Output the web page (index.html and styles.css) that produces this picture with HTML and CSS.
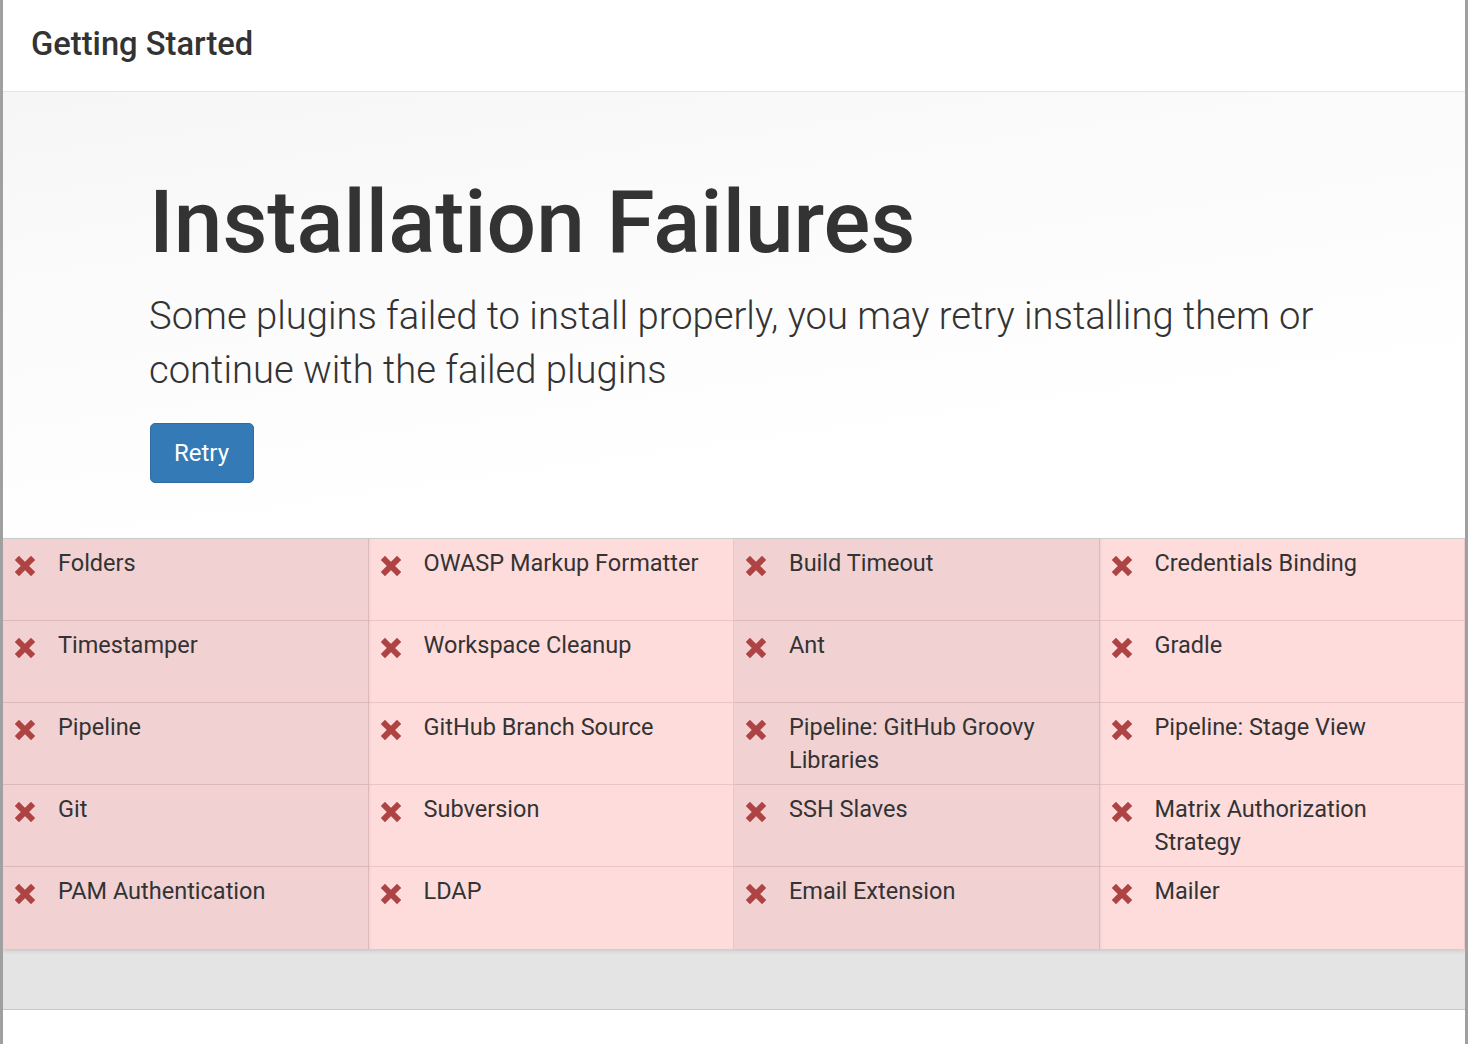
FILE: index.html
```html
<!DOCTYPE html>
<html lang="en">
<head>
<meta charset="utf-8">
<title>Getting Started</title>
<link rel="stylesheet" href="styles.css">
</head>
<body>
<div class="frame">
  <header class="header">
    <h2 class="header-title">Getting Started</h2>
  </header>
  <section class="hero">
    <h1 class="hero-title">Installation Failures</h1>
    <p class="hero-lead">Some plugins failed to install properly, you may retry installing them or continue with the failed plugins</p>
    <button class="btn-retry" type="button">Retry</button>
  </section>
  <div class="plugins">
    <div class="plugin"><svg class="x" viewBox="0 0 20 20"><path d="M4 4L16 16M16 4L4 16"/></svg><span class="name">Folders</span></div>
    <div class="plugin"><svg class="x" viewBox="0 0 20 20"><path d="M4 4L16 16M16 4L4 16"/></svg><span class="name">OWASP Markup Formatter</span></div>
    <div class="plugin"><svg class="x" viewBox="0 0 20 20"><path d="M4 4L16 16M16 4L4 16"/></svg><span class="name">Build Timeout</span></div>
    <div class="plugin"><svg class="x" viewBox="0 0 20 20"><path d="M4 4L16 16M16 4L4 16"/></svg><span class="name">Credentials Binding</span></div>
    <div class="plugin"><svg class="x" viewBox="0 0 20 20"><path d="M4 4L16 16M16 4L4 16"/></svg><span class="name">Timestamper</span></div>
    <div class="plugin"><svg class="x" viewBox="0 0 20 20"><path d="M4 4L16 16M16 4L4 16"/></svg><span class="name">Workspace Cleanup</span></div>
    <div class="plugin"><svg class="x" viewBox="0 0 20 20"><path d="M4 4L16 16M16 4L4 16"/></svg><span class="name">Ant</span></div>
    <div class="plugin"><svg class="x" viewBox="0 0 20 20"><path d="M4 4L16 16M16 4L4 16"/></svg><span class="name">Gradle</span></div>
    <div class="plugin"><svg class="x" viewBox="0 0 20 20"><path d="M4 4L16 16M16 4L4 16"/></svg><span class="name">Pipeline</span></div>
    <div class="plugin"><svg class="x" viewBox="0 0 20 20"><path d="M4 4L16 16M16 4L4 16"/></svg><span class="name">GitHub Branch Source</span></div>
    <div class="plugin"><svg class="x" viewBox="0 0 20 20"><path d="M4 4L16 16M16 4L4 16"/></svg><span class="name">Pipeline: GitHub Groovy Libraries</span></div>
    <div class="plugin"><svg class="x" viewBox="0 0 20 20"><path d="M4 4L16 16M16 4L4 16"/></svg><span class="name">Pipeline: Stage View</span></div>
    <div class="plugin"><svg class="x" viewBox="0 0 20 20"><path d="M4 4L16 16M16 4L4 16"/></svg><span class="name">Git</span></div>
    <div class="plugin"><svg class="x" viewBox="0 0 20 20"><path d="M4 4L16 16M16 4L4 16"/></svg><span class="name">Subversion</span></div>
    <div class="plugin"><svg class="x" viewBox="0 0 20 20"><path d="M4 4L16 16M16 4L4 16"/></svg><span class="name">SSH Slaves</span></div>
    <div class="plugin"><svg class="x" viewBox="0 0 20 20"><path d="M4 4L16 16M16 4L4 16"/></svg><span class="name">Matrix Authorization Strategy</span></div>
    <div class="plugin"><svg class="x" viewBox="0 0 20 20"><path d="M4 4L16 16M16 4L4 16"/></svg><span class="name">PAM Authentication</span></div>
    <div class="plugin"><svg class="x" viewBox="0 0 20 20"><path d="M4 4L16 16M16 4L4 16"/></svg><span class="name">LDAP</span></div>
    <div class="plugin"><svg class="x" viewBox="0 0 20 20"><path d="M4 4L16 16M16 4L4 16"/></svg><span class="name">Email Extension</span></div>
    <div class="plugin"><svg class="x" viewBox="0 0 20 20"><path d="M4 4L16 16M16 4L4 16"/></svg><span class="name">Mailer</span></div>
  </div>
  <div class="gray-area"></div>
  <footer class="footer"></footer>
</div>
</body>
</html>
```

FILE: styles.css
```css
html, body {
  margin: 0;
  padding: 0;
  background: #fff;
}

body {
  font-family: Roboto, "Noto Sans", "Liberation Sans", sans-serif;
  color: #333;
}

.frame {
  box-sizing: border-box;
  height: 1044px;
  border-left: 3px solid #a0a0a0;
  border-right: 3px solid #a0a0a0;
  display: flex;
  flex-direction: column;
  overflow: hidden;
  background: #fff;
}

.header {
  box-sizing: border-box;
  height: 92px;
  flex: none;
  border-bottom: 1px solid #e5e5e5;
  display: flex;
  align-items: center;
  padding-left: 28px;
  padding-bottom: 3px;
}

.header-title {
  margin: 0;
  font-size: 32.7px;
  font-weight: 500;
  line-height: 40px;
  color: #333;
}

.hero {
  flex: none;
  padding: 82px 110px 55px 146px;
  background: linear-gradient(172deg, #f6f6f6 0%, #fbfbfb 35%, #ffffff 75%);
}

.hero-title {
  margin: 0;
  font-size: 87.4px;
  font-weight: 500;
  line-height: 97px;
  color: #333;
}

.hero-lead {
  margin: 18px 0 26px;
  font-size: 38.2px;
  font-weight: 300;
  line-height: 54px;
  color: #333;
}

.btn-retry {
  display: block;
  font-family: inherit;
  font-size: 24px;
  font-weight: 400;
  line-height: 34px;
  padding: 12px 24px 12px 23px;
  color: #fff;
  background: #337ab7;
  border: 1px solid #2e6da4;
  border-radius: 5px;
  margin-left: 1px;
}

.plugins {
  flex: none;
  display: grid;
  grid-template-columns: repeat(4, 1fr);
  grid-auto-rows: 82px;
  border-top: 1px solid #cfcfcf;
  box-shadow: 0 2px 4px rgba(0, 0, 0, 0.12);
  position: relative;
  z-index: 1;
}

.plugin {
  box-sizing: border-box;
  display: flex;
  align-items: flex-start;
  gap: 23px;
  padding: 8px 10px 0 12px;
  background: #fedcdc;
  border-bottom: 1px solid rgba(150, 90, 95, 0.18);
  box-shadow: inset -1px 0 0 rgba(150, 90, 95, 0.15);
}

.plugin:nth-child(4n+1),
.plugin:nth-child(4n+3) {
  background: #f2d1d3;
  box-shadow: inset -1px 0 0 rgba(120, 80, 85, 0.18), 1px 0 2px rgba(0, 0, 0, 0.06);
  position: relative;
  z-index: 1;
}

.plugin:nth-last-child(-n+4) {
  border-bottom: none;
}

.x {
  flex: none;
  width: 20px;
  height: 20px;
  margin-top: 9px;
}

.x path {
  fill: none;
  stroke: #ad4343;
  stroke-width: 6;
  stroke-linecap: square;
}

.name {
  font-size: 23.5px;
  line-height: 33px;
  color: #333;
}

.gray-area {
  flex: none;
  height: 60px;
  background: #e4e4e4;
  border-bottom: 1px solid #c9c9c9;
}

.footer {
  flex: 1;
  background: #fff;
}
```
